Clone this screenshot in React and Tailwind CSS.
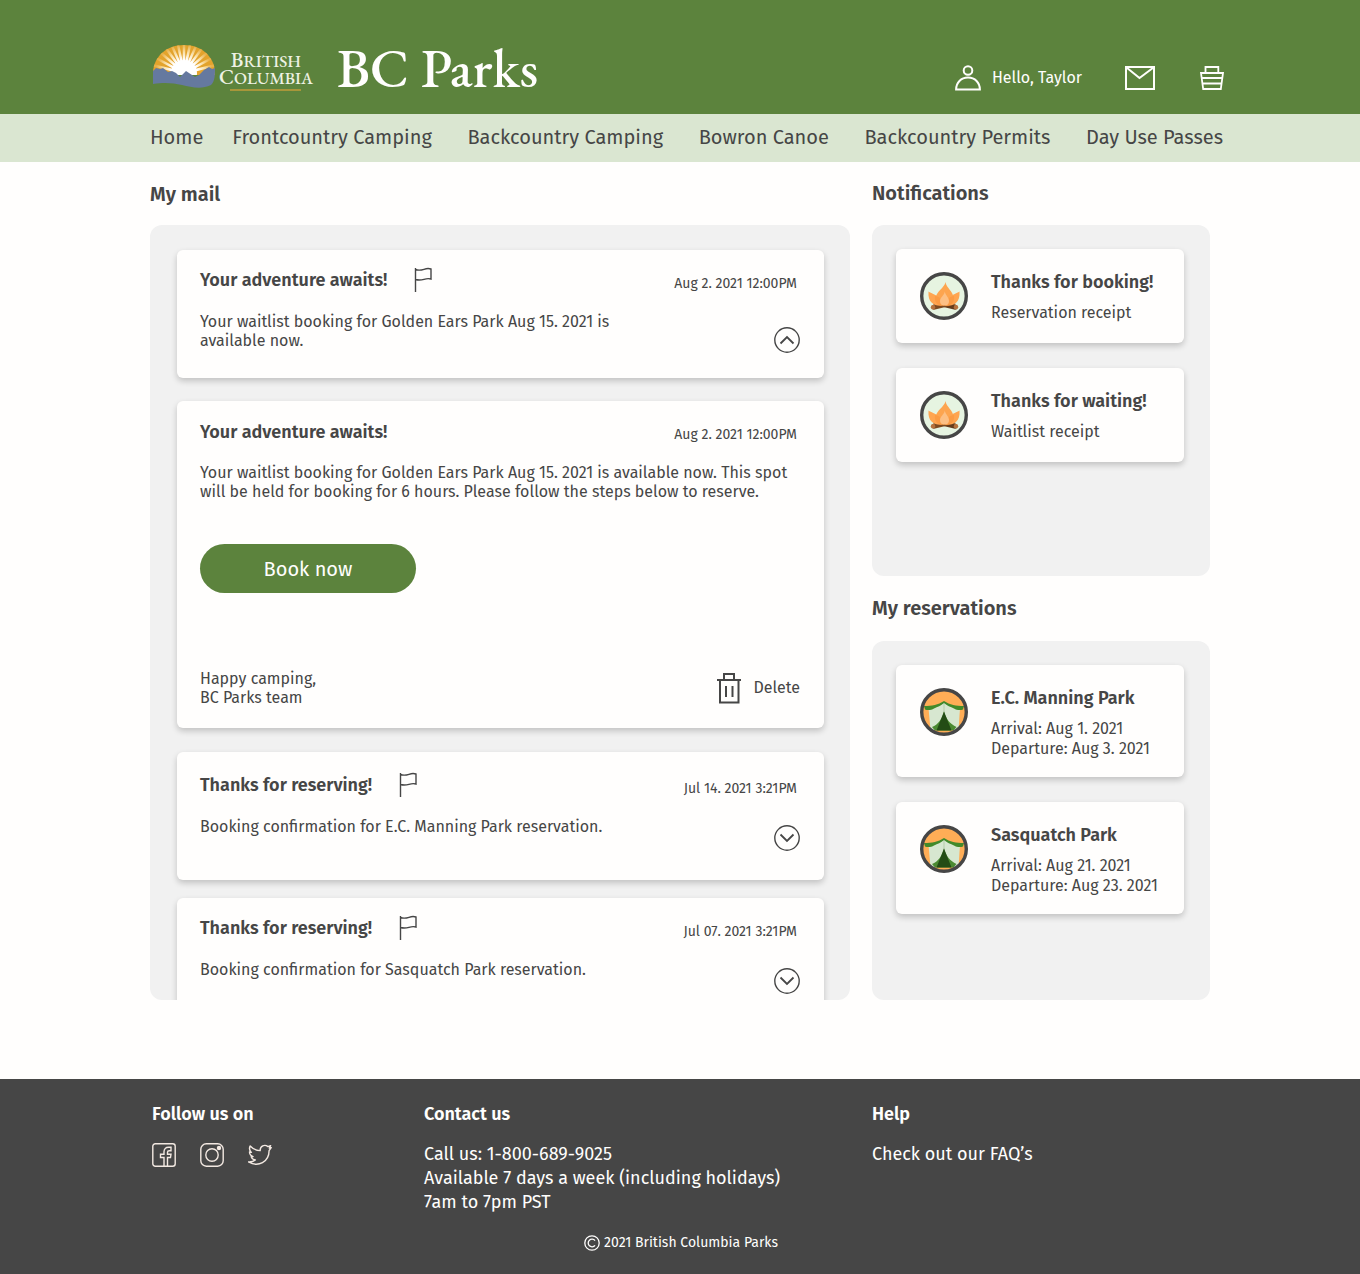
import React from "react";

const mail = [
  {
    title: "Your adventure awaits!",
    date: "Aug 2. 2021 12:00PM",
    body: "Your waitlist booking for Golden Ears Park Aug 15. 2021 is available now.",
    spacing: "min-h-32 pt-[17px]",
    open: true,
  },
  {
    title: "Your adventure awaits!",
    date: "Aug 2. 2021 12:00PM",
    body: "Your waitlist booking for Golden Ears Park Aug 15. 2021 is available now. This spot will be held for booking for 6 hours. Please follow the steps below to reserve.",
    expanded: true,
  },
  {
    title: "Thanks for reserving!",
    date: "Jul 14. 2021 3:21PM",
    body: "Booking confirmation for E.C. Manning Park reservation.",
    spacing: "mt-6 min-h-32 pt-5",
  },
  {
    title: "Thanks for reserving!",
    date: "Jul 07. 2021 3:21PM",
    body: "Booking confirmation for Sasquatch Park reservation.",
    spacing: "mt-[18px] min-h-32 pt-[17px]",
  },
];

const navLinks = ["Backcountry Camping", "Bowron Canoe", "Backcountry Permits", "Day Use Passes"];

function SunLogo() {
  const rays = [-76, -62, -49, -36, -24, -12, 0, 12, 24, 36, 49, 62, 76];
  return (
    <svg width="62" height="44" viewBox="0 0 62 44" aria-hidden="true">
      <defs>
        <clipPath id="sun-dome">
          <path d="M0 27C1 11 14 0 31 0s30 11 31 27v3H0z" />
        </clipPath>
        <radialGradient id="ray-fade" gradientUnits="userSpaceOnUse" cx="31" cy="28" r="30">
          <stop offset="0.45" stopColor="#fff" />
          <stop offset="0.7" stopColor="#fae0a6" />
          <stop offset="0.95" stopColor="#e8b048" />
        </radialGradient>
      </defs>
      <g clipPath="url(#sun-dome)">
        <rect width="62" height="30" fill="#e3a32c" />
        <g fill="url(#ray-fade)">
          {rays.map((a) => {
            const t = (a * Math.PI) / 180;
            const p = (r, d) => `${31 + r * Math.sin(t + d)} ${28 - r * Math.cos(t + d)}`;
            return <path key={a} d={`M${p(11, -0.12)}L${p(34, -0.035)}L${p(34, 0.035)}L${p(11, 0.12)}z`} />;
          })}
        </g>
        <circle cx="31" cy="28" r="13" fill="#fff" />
      </g>
      <path
        d="M0 26l3-3 4 1 3-1 5 4 4-1 4 2 4 4 6-6 6 4 3 2 4-2 5-5 5-3 3 2 3-1c0 7 0 13-4 17-10 5-20 2-29 0-9-2-17-3-29-1z"
        fill="#65799f"
      />
    </svg>
  );
}

function UserIcon() {
  return (
    <svg width="26" height="26" viewBox="0 0 26 26" fill="none" stroke="currentColor" strokeWidth="2" aria-hidden="true">
      <circle cx="13" cy="5.5" r="4.3" />
      <path d="M1.1 24.6C1.1 17.5 6 12.6 13 12.6s11.9 4.900 11.900 12z" />
    </svg>
  );
}

function MailIcon() {
  return (
    <svg width="30" height="24" viewBox="0 0 30 24" fill="none" stroke="currentColor" strokeWidth="2" aria-hidden="true">
      <path d="M1 1h28v22H1zM1.5 1.5L14.5 12 28.5 1.5" />
    </svg>
  );
}

function BasketIcon() {
  return (
    <svg width="24" height="24" viewBox="0 0 24 24" fill="none" stroke="currentColor" strokeWidth="1.8" aria-hidden="true">
      <path d="M5.5 7V1h12.8v6M1 7h22l-2.2 16H3.2zM2 12h20M3 17.5h18" />
    </svg>
  );
}

function FlagIcon() {
  return (
    <svg width="18" height="26" viewBox="0 0 18 26" fill="none" stroke="currentColor" strokeWidth="1.4" aria-hidden="true">
      <path d="M1.5 1v24M1.5 2.500c3.500 1.300 6 .6 8.500-.2 2.400-.8 4.500-1.100 7-.3v10c-2.500-.8-4.600-.4-7 .3-2.500.7-5 1.200-8.500.2" />
    </svg>
  );
}

function ChevronCircle({ up }) {
  return (
    <svg width="26" height="26" viewBox="0 0 26 26" fill="none" stroke="currentColor" aria-hidden="true">
      <circle cx="13" cy="13" r="12.2" strokeWidth="1.4" />
      <path d={up ? "M6.5 16.5L13 10l6.5 6.5" : "M6.5 9.5L13 16l6.5-6.5"} strokeWidth="1.8" />
    </svg>
  );
}

function TrashIcon() {
  return (
    <svg width="24" height="31" viewBox="0 0 24 31" fill="none" stroke="currentColor" strokeWidth="2" aria-hidden="true">
      <path d="M0 7h24M7 7V1h10v6M3 7v22.5h18.5V7M9 13v11M15.5 13v11" />
    </svg>
  );
}

function CampfireIcon() {
  return (
    <svg className="shrink-0" width="48" height="48" viewBox="0 0 48 48" aria-hidden="true">
      <circle cx="24" cy="24" r="22.3" fill="#e6f4e1" stroke="#464646" strokeWidth="3.4" />
      <path d="M13 32.500l22 5.200c2 .4 3.500-3.700 1.500-4.200l-20-4z" fill="#643c1c" />
      <path d="M36 32.500l-22 5.200c-2 .4-3.500-3.700-1.500-4.200l20-4z" fill="#7d4a20" />
      <circle cx="13" cy="35.3" r="2.2" fill="#b5713c" />
      <circle cx="36" cy="35.3" r="2.2" fill="#b5713c" />
      <path d="M8.500 19.500c2.500 2 8 3 11 6.500l3 7.500c-7 1-15-2-14-14zM39.500 19.500c-2.500 2-8 3-11 6.500l-3 7.500c7 1 15-2 14-14z" fill="#ffa550" />
      <path d="M25.500 10c.5 5.500 8 9.500 8 16 0 5-4 7.500-8.500 7.500s-9-2.500-9-8c0-6 8.500-9.500 9.500-15.500z" fill="#fda54f" />
      <path d="M15 24c5 .5 8 4 9 9.500-6 .5-10-3-9-9.500zM34 24c-5 .5-8 4-9 9.500 6 .5 10-3 9-9.500z" fill="#fb9b43" />
      <path d="M24.800 19.500c.7 4 4.200 6 4.200 9.500 0 3-1.500 4.500-4.500 4.500S20 32 20 29c0-3.500 4.300-5.500 4.800-9.500z" fill="#fdc084" />
    </svg>
  );
}

function TentIcon() {
  return (
    <svg className="shrink-0" width="48" height="48" viewBox="0 0 48 48" aria-hidden="true">
      <circle cx="24" cy="24" r="22.3" fill="#ffad56" />
      <path d="M8.500 20L24 14.500 40 20l-1.500 22h-28z" fill="#d7e7d0" />
      <path d="M24 14v11" stroke="#b4cda9" strokeWidth="1" />
      <path d="M24 13c-6 4-12 5-20 5l1 3.500c3 1.200 6.500.5 9-1 3.500-2 7-2.500 10-5.500 3 3 6.500 3.500 10 5.500 2.500 1.500 6 2.200 9 1l1-3.500c-8 0-14-1-20-5z" fill="#428a2a" />
      <path d="M24 23.500c-2 8-6 13-12 15.500l3 3.500h18.500l3-3.500c-6.500-3-10.500-8-12.500-15.500z" fill="#4b8a32" />
      <path d="M24 23.500l-7.500 19h15z" fill="#234c15" />
      <circle cx="24" cy="24" r="22.3" fill="none" stroke="#464646" strokeWidth="3.4" />
    </svg>
  );
}

function FacebookIcon() {
  return (
    <svg width="24" height="24" viewBox="0 0 24 24" fill="none" stroke="currentColor" strokeWidth="1.4" aria-hidden="true">
      <rect x=".8" y=".8" width="22.4" height="22.4" rx="2.5" />
      <path d="M12 23v-8.500H8.500v-3.300H12V8.800c0-3 1.800-4.500 4.500-4.500H19v3.400h-1.800c-1.200 0-1.700.5-1.700 1.600v1.900H19l-.5 3.300h-3V23" />
    </svg>
  );
}

function InstagramIcon() {
  return (
    <svg width="24" height="24" viewBox="0 0 24 24" fill="none" stroke="currentColor" strokeWidth="1.4" aria-hidden="true">
      <rect x=".8" y=".8" width="22.4" height="22.4" rx="5.5" />
      <circle cx="12" cy="12" r="6.2" />
      <circle cx="19" cy="5" r="1.5" fill="currentColor" />
    </svg>
  );
}

function TwitterIcon() {
  return (
    <svg width="24" height="24" viewBox="0 0 24 24" fill="none" stroke="currentColor" strokeWidth="1.4" strokeLinejoin="round" aria-hidden="true">
      <path d="M23.200 4.600l-1.900.4 1.300-2.400-2.700 1c-3.200-2.700-8-.6-7.700 4C8 7.500 4.800 5.700 2.200 2.900 1 5.400 1.500 7.700 3.400 9.400L1.500 9c.1 2.300 1.400 3.900 3.600 4.600l-1.900.1c.7 1.900 2.200 3 4.200 3.200-2 1.500-4.200 2.200-6.900 2 9.800 5.800 20.600.2 20.600-11.300z" />
    </svg>
  );
}

const cardStyle = "rounded-md bg-[#fffefd] shadow-[0_3px_6px_rgba(0,0,0,0.2)]";
const panelStyle = "rounded-xl bg-[#f1f1f1]";
const headingStyle = "text-[20px] leading-7 font-semibold";
const cardTitle = "text-[18px] leading-[26px] font-semibold";
const dateStyle = "mt-[7px] mr-[3px] text-[14px] leading-5";

function MailCard({ item }) {
  if (item.expanded) {
    return (
      <article className={`${cardStyle} mt-[23px] pt-[17px] pr-6 pb-[21px] pl-[23px]`}>
        <div className="flex items-center justify-between">
          <h3 className={cardTitle}>{item.title}</h3>
          <time className={dateStyle}>{item.date}</time>
        </div>
        <p className="mt-[18px] text-[16px] leading-[19px]">{item.body}</p>
        <button type="button" className="mt-[43px] h-[49px] w-[216px] rounded-full bg-[#5c833d] text-[20px] text-[#fffefd]">
          Book now
        </button>
        <div className="mt-[76px] flex items-center justify-between">
          <p className="text-[16px] leading-[19px]">
            Happy camping,
            <br />
            BC Parks team
          </p>
          <button type="button" className="flex items-center gap-3 text-[16px]">
            <TrashIcon />
            Delete
          </button>
        </div>
      </article>
    );
  }
  return (
    <article className={`${cardStyle} ${item.spacing} flex justify-between pr-6 pl-[23px]`}>
      <div>
        <div className="flex items-center gap-[27px]">
          <h3 className={cardTitle}>{item.title}</h3>
          <button type="button" aria-label="Flag message">
            <FlagIcon />
          </button>
        </div>
        <p className="mt-[19px] max-w-[440px] text-[16px] leading-[19px]">{item.body}</p>
      </div>
      <div className="flex flex-col items-end">
        <time className={dateStyle}>{item.date}</time>
        <button
          type="button"
          className={item.open ? "mt-[33px]" : "mt-[26px]"}
          aria-label={item.open ? "Collapse message" : "Expand message"}
        >
          <ChevronCircle up={item.open} />
        </button>
      </div>
    </article>
  );
}

function SideCard({ icon, title, lines }) {
  return (
    <article className={`${cardStyle} flex min-h-[94px] gap-[23px] pt-[23px] pb-[18px] pl-6`}>
      {icon}
      <div className="-mt-[3px]">
        <h3 className={cardTitle}>{title}</h3>
        <div className="mt-2 text-[16px] leading-5">
          {lines.map((line) => (
            <p key={line}>{line}</p>
          ))}
        </div>
      </div>
    </article>
  );
}

export default function App() {
  return (
    <div className="flex min-h-screen flex-col bg-[#fffefd] font-['Fira_Sans','Noto_Sans',sans-serif] text-[#464646]">
      <header className="flex h-[114px] items-start justify-between bg-[#5c833d] pt-[45px] pr-[136px] pl-[153px] text-[#fffefd]">
        <a href="#home" className="flex items-start font-['EB_Garamond','Liberation_Serif',serif] font-medium" aria-label="BC Parks home">
          <SunLogo />
          <span className="mt-[7px] ml-1 flex flex-col items-center text-[17px] leading-[15px] text-[#eef2e4]">
            <span>
              <span className="text-[21px]">B</span>RITISH
            </span>
            <span>
              <span className="text-[21px]">C</span>OLUMBIA
            </span>
            <span className="mt-[3px] h-[2px] w-[71px] bg-[#a8963a]" />
          </span>
          <span className="ml-6 text-[55px] leading-[46px]">BC Parks</span>
        </a>
        <div className="mt-5 flex items-center">
          <a href="#account" className="flex items-center gap-[11px] text-[16px]">
            <UserIcon />
            Hello, Taylor
          </a>
          <a href="#mail" className="ml-[43px]" aria-label="Mail">
            <MailIcon />
          </a>
          <a href="#basket" className="ml-[45px]" aria-label="Basket">
            <BasketIcon />
          </a>
        </div>
      </header>

      <nav className="flex h-12 items-center justify-between bg-[#dae6d1] pr-[137px] pb-0.5 pl-[150px] text-[20px]">
        <div className="flex gap-[29px]">
          <a href="#home">Home</a>
          <a href="#frontcountry">Frontcountry Camping</a>
        </div>
        {navLinks.map((label) => (
          <a key={label} href="#nav">
            {label}
          </a>
        ))}
      </nav>

      <main className="grid grid-cols-[700fr_338fr] gap-[22px] px-[150px] pt-[17px] pb-[79px]">
        <section>
          <h2 className={`${headingStyle} pt-px`}>My mail</h2>
          <div className={`${panelStyle} mt-[17px] h-[775px] overflow-hidden pt-[25px] pr-[26px] pl-[27px]`}>
            {mail.map((item, i) => (
              <MailCard key={i} item={item} />
            ))}
          </div>
        </section>

        <div>
          <section>
            <h2 className={headingStyle}>Notifications</h2>
            <div className={`${panelStyle} mt-[18px] flex min-h-[351px] flex-col gap-[25px] pt-6 pr-[26px] pl-6`}>
              <SideCard icon={<CampfireIcon />} title="Thanks for booking!" lines={["Reservation receipt"]} />
              <SideCard icon={<CampfireIcon />} title="Thanks for waiting!" lines={["Waitlist receipt"]} />
            </div>
          </section>
          <section>
            <h2 className={`${headingStyle} mt-[18px]`}>My reservations</h2>
            <div className={`${panelStyle} mt-[19px] flex min-h-[359px] flex-col gap-[25px] pt-6 pr-[26px] pl-6`}>
              <SideCard
                icon={<TentIcon />}
                title="E.C. Manning Park"
                lines={["Arrival: Aug 1. 2021", "Departure: Aug 3. 2021"]}
              />
              <SideCard
                icon={<TentIcon />}
                title="Sasquatch Park"
                lines={["Arrival: Aug 21. 2021", "Departure: Aug 23. 2021"]}
              />
            </div>
          </section>
        </div>
      </main>

      <footer className="grow bg-[#464646] pt-[22px] pr-[150px] pb-[21px] pl-[152px] text-[#fffefd]">
        <div className="grid grid-cols-[272fr_448fr_338fr]">
          <section>
            <h2 className={cardTitle}>Follow us on</h2>
            <div className="mt-4 flex gap-6 text-[#f3e9e2]">
              <a href="#facebook" aria-label="Facebook">
                <FacebookIcon />
              </a>
              <a href="#instagram" aria-label="Instagram">
                <InstagramIcon />
              </a>
              <a href="#twitter" aria-label="Twitter">
                <TwitterIcon />
              </a>
            </div>
          </section>
          <section>
            <h2 className={cardTitle}>Contact us</h2>
            <p className="mt-[15px] text-[18px] leading-6">
              Call us: 1-800-689-9025
              <br />
              Available 7 days a week (including holidays)
              <br />
              7am to 7pm PST
            </p>
          </section>
          <section>
            <h2 className={cardTitle}>Help</h2>
            <a href="#faq" className="mt-[15px] block text-[18px] leading-6">
              Check out our FAQ’s
            </a>
          </section>
        </div>
        <p className="mt-[19px] flex items-center justify-center gap-1 text-[14px] leading-5">
          <svg width="16" height="16" viewBox="0 0 16 16" fill="none" stroke="currentColor" strokeWidth="1.3" aria-label="Copyright">
            <circle cx="8" cy="8" r="7.2" />
            <path d="M11 5.7A3.8 3.8 0 1 0 11 10.3" />
          </svg>
          2021 British Columbia Parks
        </p>
      </footer>
    </div>
  );
}
